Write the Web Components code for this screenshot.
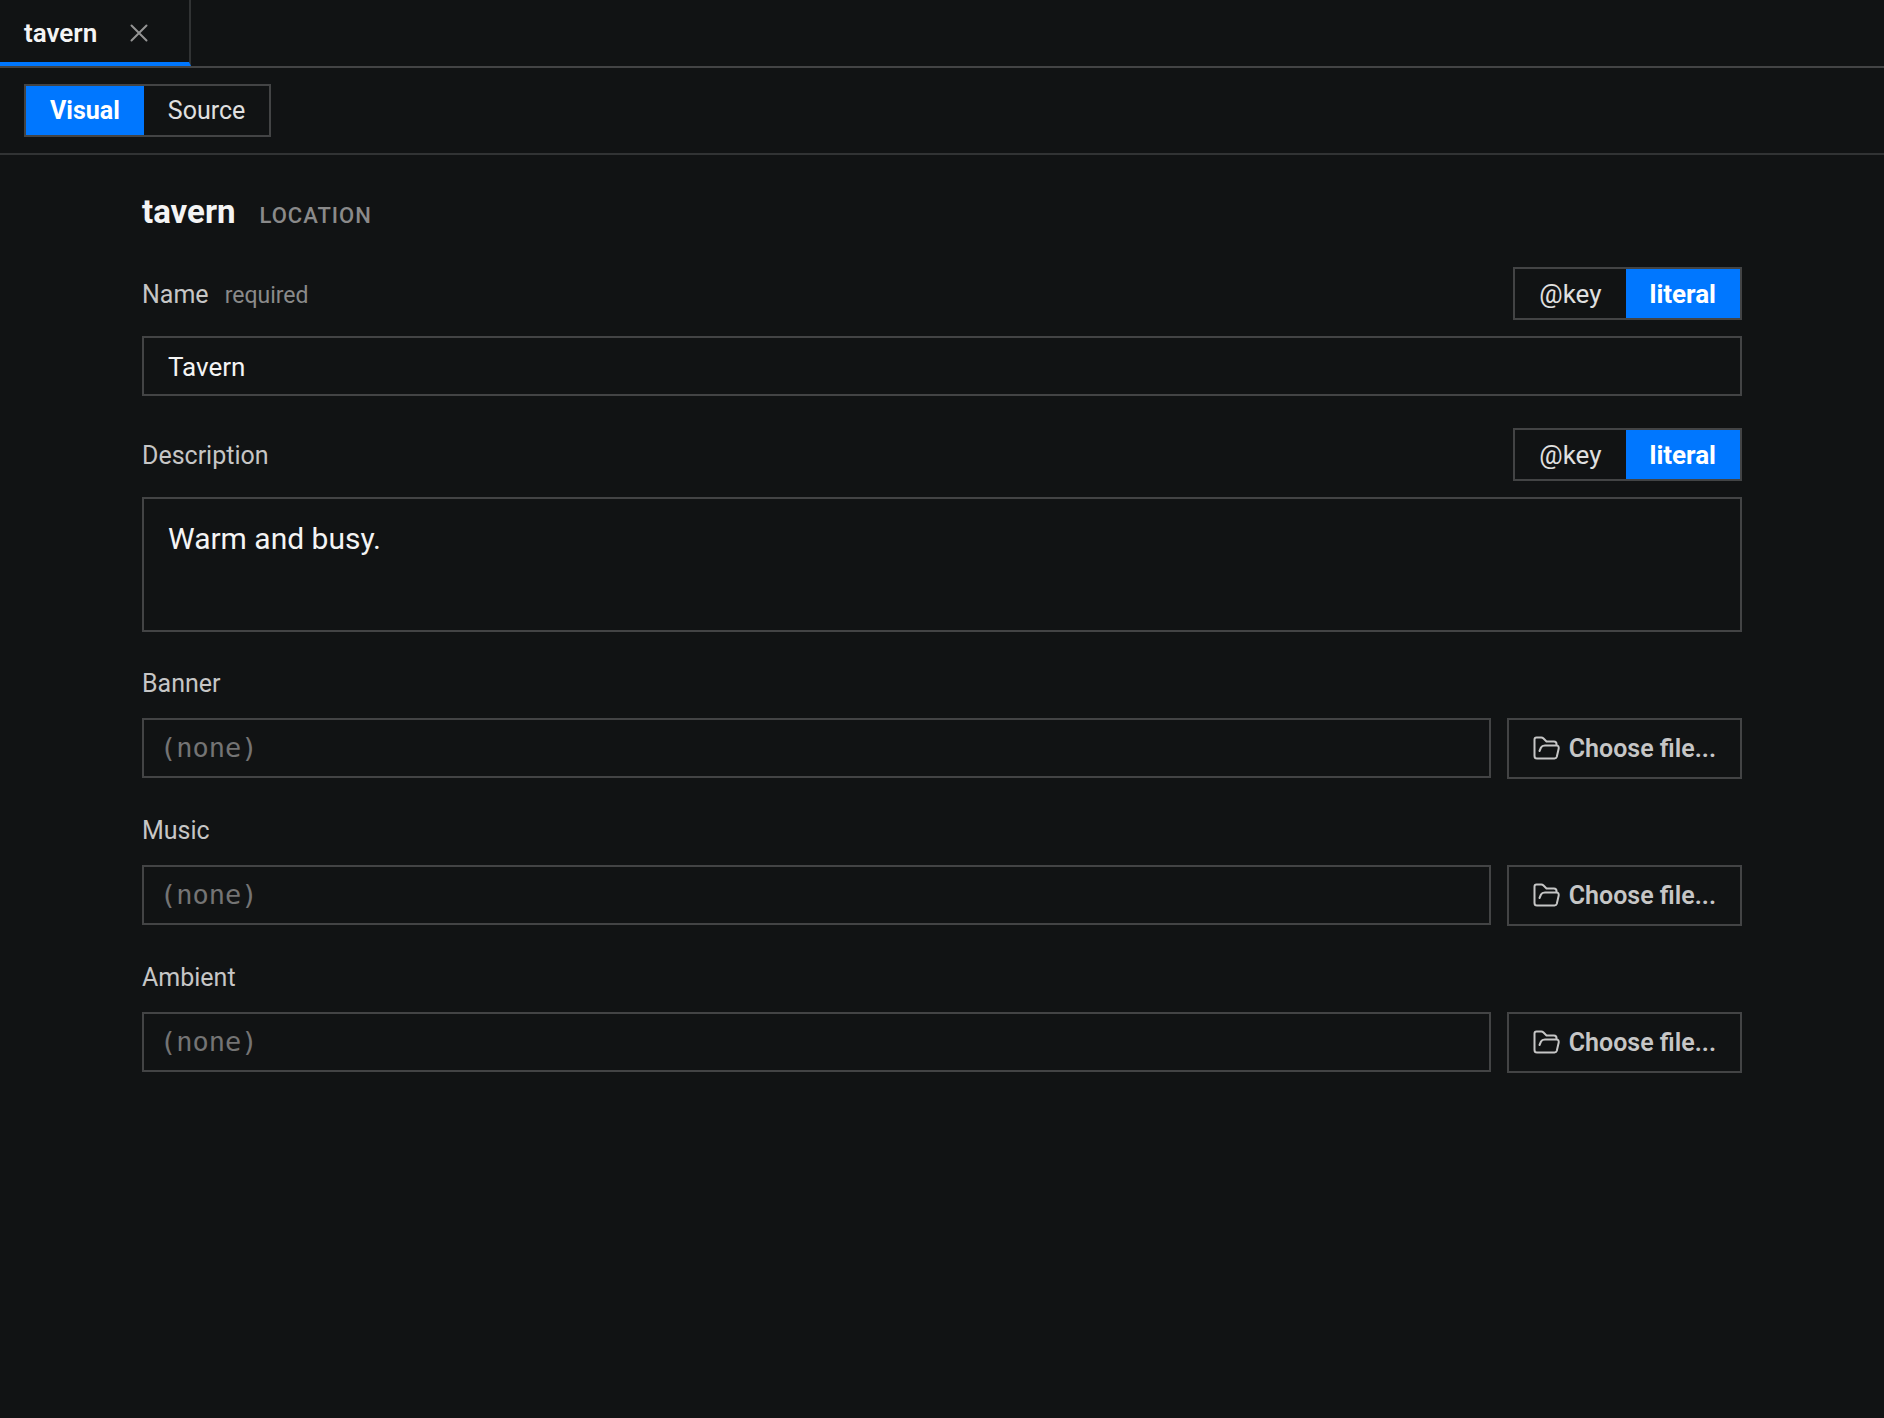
<!DOCTYPE html>
<html lang="en">
<head>
<meta charset="utf-8">
<title>tavern</title>
<style>
  :root {
    --bg: #111314;
    --line: #434445;
    --line-soft: #313334;
    --accent: #0077ff;
    --text: #f4f4f4;
    --text-2: #c6c6c6;
    --text-3: #8a8a8a;
    --text-4: #747474;
  }
  html { background: var(--bg); }
  body { margin: 0; font-family: Roboto, "Liberation Sans", sans-serif; font-size: 26px; color: var(--text); }
</style>
</head>
<body>
<editor-app></editor-app>
<script>
const base = `
  *, *::before, *::after { box-sizing: border-box; }
  button, input, textarea { font: inherit; color: inherit; margin: 0; border-radius: 0; outline: none; }
  button { cursor: pointer; }
`;

function define(name, css, html) {
  customElements.define(name, class extends HTMLElement {
    constructor() {
      super();
      const attr = (key) => this.getAttribute(key) || "";
      this.attachShadow({ mode: "open" }).innerHTML =
        `<style>${base}${css}</style>` + (typeof html === "function" ? html(attr) : html);
    }
  });
}

/* Two-way switch; the active option is named by the "active" attribute. */
define("mode-switch", `
  :host { display: inline-flex; border: 2px solid var(--line); color: #e0e0e0; }
  button { border: 0; background: none; height: 49px; padding: 1px 24px 0; line-height: 32px; }
  button[aria-pressed="true"] { background: var(--accent); color: #fff; font-weight: 700; }
`, (attr) => attr("options").split(",").map((o) =>
  `<button type="button" aria-pressed="${o === attr("active")}">${o}</button>`).join(""));

define("editor-tab", `
  :host { display: flex; align-items: center; gap: 29px; padding: 4px 37px 0 24px; height: 66px;
          border-right: 2px solid var(--line-soft); border-bottom: 4px solid var(--accent); font-weight: 600; }
  button { display: flex; padding: 4px; border: 0; background: none; color: #949494; }
  svg { display: block; width: 18px; height: 18px; }
`, `
  <span><slot></slot></span>
  <button type="button" aria-label="Close"><svg viewBox="0 0 18 18" fill="none" stroke="currentColor" stroke-width="2" stroke-linecap="round"><path d="M1.5 1.5l15 15M16.5 1.5l-15 15"/></svg></button>
`);

define("text-field", `
  :host { display: flex; flex-direction: column; gap: 16px; }
  .head { display: flex; align-items: center; justify-content: space-between; }
  .name { display: flex; align-items: baseline; gap: 16px; padding-top: 2px; font-size: 25px; color: var(--text-2); }
  small { font-size: 23px; color: var(--text-3); }
  input, textarea { display: block; width: 100%; background: none; border: 2px solid var(--line); padding: 2px 24px 0; }
  input { height: 60px; }
  textarea { height: 135px; padding-top: 20px; font-size: 30px; line-height: 40px; resize: none; }
`, (attr) => `
  <div class="head">
    <div class="name"><label for="control">${attr("label")}</label>${attr("note") ? `<small>${attr("note")}</small>` : ""}</div>
    <mode-switch options="@key,literal" active="literal"></mode-switch>
  </div>
  ${attr("kind") === "multiline"
    ? `<textarea id="control">${attr("value")}</textarea>`
    : `<input id="control" type="text" value="${attr("value")}">`}
`);

define("file-field", `
  :host { display: flex; flex-direction: column; gap: 16px; font-size: 25px; color: var(--text-2); }
  label { padding-top: 2px; line-height: 36px; }
  .row { display: flex; align-items: flex-start; gap: 16px; }
  input { flex: 1; min-width: 0; height: 60px; padding: 0 16px 2px; background: none; border: 2px solid var(--line);
          font-family: "DejaVu Sans Mono", monospace; font-size: 27px; }
  input::placeholder { color: var(--text-4); opacity: 1; }
  button { display: flex; align-items: center; gap: 9px; height: 61px; padding: 0 24px; background: none;
           border: 2px solid var(--line); font-weight: 600; white-space: nowrap; }
  svg { display: block; width: 27px; height: 24px; margin-bottom: 2px; }
`, (attr) => `
  <label for="control">${attr("label")}</label>
  <div class="row">
    <input id="control" type="text" placeholder="(none)" readonly>
    <button type="button"><svg viewBox="0 0 27 24" fill="none" stroke="currentColor" stroke-width="2" stroke-linecap="round" stroke-linejoin="round"><path d="M23.500 9.500V8Q23.500 5.500 21 5.500H13.500L10.500 2.500Q9.500 1.500 8.200 1.500H3.500Q1.500 1.500 1.500 3.500V20Q1.500 22.500 4 22.500H21.500Q23.300 22.500 23.800 20.800L25.700 12.500Q26 9.500 23.500 9.500H12Q9 9.500 8 11.500L6.500 15"/></svg><span>Choose file...</span></button>
  </div>
`);

define("editor-app", `
  :host { display: block; }
  nav { display: flex; border-bottom: 2px solid var(--line); }
  .bar { display: flex; padding: 16px 24px; border-bottom: 2px solid var(--line-soft); font-size: 25px; }
  main { display: flex; flex-direction: column; gap: 32px; max-width: 1648px; margin: 0 auto; padding: 36px 24px; }
  header { display: flex; align-items: baseline; gap: 24px; padding-top: 2px; line-height: 38px; }
  h1 { margin: 0; font-size: 33px; font-weight: 700; }
  .kind { font-size: 22px; font-weight: 500; letter-spacing: 1px; color: var(--text-3); text-transform: uppercase; }
`, `
  <nav><editor-tab>tavern</editor-tab></nav>
  <div class="bar"><mode-switch options="Visual,Source" active="Visual"></mode-switch></div>
  <main>
    <header><h1>tavern</h1><span class="kind">LOCATION</span></header>
    <text-field label="Name" note="required" value="Tavern"></text-field>
    <text-field label="Description" kind="multiline" value="Warm and busy."></text-field>
    <file-field label="Banner"></file-field>
    <file-field label="Music"></file-field>
    <file-field label="Ambient"></file-field>
  </main>
`);
</script>
</body>
</html>
